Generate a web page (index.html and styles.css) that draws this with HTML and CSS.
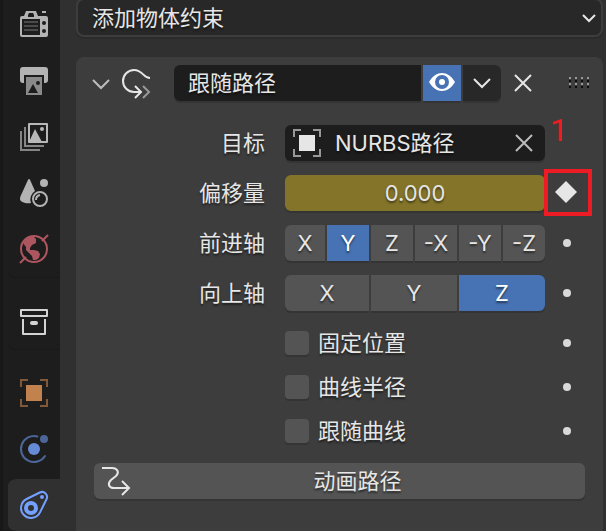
FILE: index.html
```html
<!DOCTYPE html>
<html lang="zh-CN">
<head>
<meta charset="utf-8">
<title>物体约束</title>
<link rel="stylesheet" href="styles.css">
</head>
<body>
<nav class="tabs" aria-label="属性">
  <div class="tab-group">
    <button class="tab" aria-label="渲染"><svg class="icon" viewBox="0 0 28 28"><path fill="#b3b3b3" fill-rule="evenodd" d="M2 5h2l2-5h10l2 5h8a2 2 0 0 1 2 2v17a2 2 0 0 1-2 2H2a2 2 0 0 1-2-2V7a2 2 0 0 1 2-2zM9 2L8 4v2h6V4l-1-2zM2 8v16h18V8z"/><path fill="#b3b3b3" d="M22 0h4v2h-4z"/><path stroke="#4a4a4a" stroke-width="2" d="M4 11h14M4 15h14M4 19h14"/><circle cx="24" cy="12" r="2" fill="#1d1d1d"/><circle cx="24" cy="20" r="2" fill="#1d1d1d"/></svg></button>
    <button class="tab" aria-label="输出"><svg class="icon" viewBox="0 0 28 28"><path fill="#b3b3b3" d="M3 0h22a3 3 0 0 1 3 3v10a3 3 0 0 1-3 3h-1V8H4v8H3a3 3 0 0 1-3-3V3a3 3 0 0 1 3-3z"/><path fill="#8a8a8a" d="M6 10h16v18H6z"/><path fill="#1d1d1d" d="M8 26l5-9 5 9z"/><circle cx="18" cy="16" r="2" fill="#1d1d1d"/></svg></button>
    <button class="tab" aria-label="视图层"><svg class="icon" viewBox="0 0 28 28"><path fill="none" stroke="#b8b8b8" stroke-width="2" stroke-linejoin="round" d="M9 1h18v18H9z"/><path fill="#b8b8b8" d="M9 19l6-13 7 13z"/><circle cx="22" cy="6" r="2" fill="#b8b8b8"/><path fill="none" stroke="#858585" stroke-width="2" d="M5 4v19h19M1 8v19h19"/></svg></button>
    <button class="tab" aria-label="场景"><svg class="icon" viewBox="0 0 28 28"><path fill="#b3b3b3" d="M9 0c1 0 1 1 2 3l4 9a10 10 0 0 0-4 12c-5 1-11-1-11-4 0-2 1-4 2-6L7 3c1-2 1-3 2-3z"/><circle cx="24" cy="4" r="4" fill="#b3b3b3"/><circle cx="20" cy="20" r="7" fill="none" stroke="#b3b3b3" stroke-width="2"/><path fill="none" stroke="#b3b3b3" stroke-width="2" d="M16 21q0-4 4-5"/></svg></button>
    <button class="tab" aria-label="世界环境"><svg class="icon" viewBox="0 0 28 28"><circle cx="14" cy="14" r="13" fill="none" stroke="#ae565f" stroke-width="2"/><path stroke="#ae565f" stroke-width="2" d="M28 0l-6 6M6 22l-6 6"/><path fill="#ae565f" d="M3 8l4-5 6-2 3 3v4l-4 2-2 3v2h4l4 1 2 3-1 4-3 2h-3l-1-4-3-3-3-3V12z"/></svg></button>
  </div>
  <div class="tab-group">
    <button class="tab" aria-label="集合"><svg class="icon" viewBox="0 0 28 28"><path fill="none" stroke="#d4d4d4" stroke-width="2" stroke-linejoin="round" d="M1 3h26v6H1zM3 12v15h22V12"/><rect x="10" y="14" width="8" height="4" rx="2" fill="#d4d4d4"/></svg></button>
  </div>
  <div class="tab-group">
    <button class="tab" aria-label="物体"><svg class="icon" viewBox="0 0 28 28"><path fill="none" stroke="#80593a" stroke-width="2" d="M1 8V1h7M20 1h7v7M27 20v7h-7M8 27H1v-7"/><path fill="#c1824e" d="M6 6h16v16H6z"/></svg></button>
    <button class="tab" aria-label="物理"><svg class="icon" viewBox="0 0 28 28"><path fill="none" stroke="#4d6699" stroke-width="2" stroke-linecap="round" d="M17.400 1.500A13 13 0 1 0 25 21"/><circle cx="14" cy="14" r="6" fill="#668bd6"/><circle cx="24" cy="4" r="4" fill="#4d6699"/></svg></button>
    <button class="tab active" aria-label="约束"><svg class="icon" viewBox="0 0 28 28"><path fill="none" stroke="#74a0ff" stroke-width="2" d="M6.600 8L19.800 1.500A5 5 0 0 1 26.500 8.200L20 21.400A10 10 0 1 1 6.600 8z"/><circle cx="11" cy="17" r="5" fill="none" stroke="#74a0ff" stroke-width="4"/><circle cx="22" cy="6" r="2" fill="#74a0ff"/></svg></button>
  </div>
</nav>
<main class="content">
  <div class="add-wrap">
    <select class="add" aria-label="添加物体约束"><option>添加物体约束</option></select>
    <svg class="add-arrow" viewBox="0 0 14 8"><path class="line" d="M1 1l6 6 6-6"/></svg>
  </div>
  <section class="panel">
    <header class="head">
      <button class="plain" aria-label="折叠"><svg class="chevron" viewBox="0 0 18 10"><path class="line dim" d="M1 2l8 8 8-8"/></svg></button>
      <svg class="follow" viewBox="0 0 28 30"><path class="line" d="M28 10C21 10 21 2 12 2a11 11 0 0 0 0 22h7M13 18l6 6-6 6"/><path class="line grey" d="M21 18l6 6-6 6"/></svg>
      <div class="name-group">
        <input class="name" aria-label="名称" value="跟随路径">
        <button class="eye" aria-label="显示"><svg class="eye-icon" viewBox="0 0 26 18"><path fill="#fff" fill-rule="evenodd" d="M0 8C7-4 19-4 26 8 19 20 7 20 0 8zM13 1a7 7 0 1 0 0 14 7 7 0 0 0 0-14z"/><circle cx="13" cy="8" r="3" fill="#fff"/></svg></button>
        <button class="more" aria-label="更多"><svg class="chevron" viewBox="0 0 18 10"><path class="line" d="M1 1l8 8 8-8"/></svg></button>
      </div>
      <button class="plain" aria-label="删除"><svg class="cross" viewBox="0 0 16 16"><path class="line" d="M0 0l16 16M16 0L0 16"/></svg></button>
      <svg class="grip" viewBox="0 0 20 11"><path stroke="#999" stroke-width="2" stroke-dasharray="2 4" d="M0 0h20M0 6h20"/><path stroke="#0c0c0c" stroke-width="2" stroke-dasharray="2 4" d="M0 3h20M0 9h20"/></svg>
    </header>
    <div class="rows">
      <div class="row">
        <label class="label" for="target">目标</label>
        <div class="target">
          <svg class="icon" viewBox="0 0 28 28"><path fill="none" stroke="#999" stroke-width="2" d="M1 8V1h7M20 1h7v7M27 20v7h-7M8 27H1v-7"/><path fill="#e6e6e6" d="M6 6h16v16H6z"/></svg>
          <input class="target-name" id="target" value="NURBS路径">
          <button class="plain" aria-label="清除"><svg class="cross" viewBox="0 0 16 16"><path class="line dim" d="M0 0l16 16M16 0L0 16"/></svg></button>
        </div>
      </div>
      <div class="row">
        <label class="label" for="offset">偏移量</label>
        <input class="offset" id="offset" value="0.000">
        <div class="key"><button class="plain" aria-label="关键帧"><svg class="diamond" viewBox="0 0 22 22"><path fill="#e6e6e6" d="M10-1l11 11-11 11L-1 10z"/></svg></button></div>
        <div class="callout"><span class="callout-number">1</span></div>
      </div>
      <div class="row">
        <span class="label" id="forward">前进轴</span>
        <div class="segments six" role="group" aria-labelledby="forward"><button>X</button><button class="on">Y</button><button>Z</button><button>-X</button><button>-Y</button><button>-Z</button></div>
        <div class="key"><button class="dot" aria-label="插入前进轴关键帧"></button></div>
      </div>
      <div class="row">
        <span class="label" id="up">向上轴</span>
        <div class="segments three" role="group" aria-labelledby="up"><button>X</button><button>Y</button><button class="on">Z</button></div>
        <div class="key"><button class="dot" aria-label="插入向上轴关键帧"></button></div>
      </div>
    </div>
    <div class="checks">
      <div class="row"><label class="check"><input type="checkbox">固定位置</label><div class="key"><button class="dot" aria-label="插入固定位置关键帧"></button></div></div>
      <div class="row"><label class="check"><input type="checkbox">曲线半径</label><div class="key"><button class="dot" aria-label="插入曲线半径关键帧"></button></div></div>
      <div class="row"><label class="check"><input type="checkbox">跟随曲线</label><div class="key"><button class="dot" aria-label="插入跟随曲线关键帧"></button></div></div>
    </div>
    <button class="animate"><svg class="icon" viewBox="0 0 28 28"><path class="line" d="M0 1h10C15 1 18 5 14 9L9 13C5 17 7 21 12 21h15M20 14l7 7-7 7"/></svg><span>动画路径</span></button>
  </section>
</main>
</body>
</html>
```
FILE: styles.css
```css
* { box-sizing: border-box; }

body {
  margin: 0;
  height: 100vh;
  display: flex;
  overflow: hidden;
  background: #303030;
  color: #e6e6e6;
  font: 22px/36px Inter, "Noto Sans CJK SC", sans-serif;
}

button, input, select {
  margin: 0;
  padding: 0;
  border: 0;
  border-radius: 0;
  background: none;
  color: inherit;
  font: inherit;
  text-shadow: inherit;
}

svg { display: block; flex: none; overflow: visible; }

.icon { width: 28px; height: 28px; }
.line { fill: none; stroke: #e6e6e6; stroke-width: 2; }
.dim { stroke: #bdbdbd; }
.grey { stroke: #999; }

.tabs {
  flex: none;
  width: 60px;
  border-left: 3px solid #181818;
  background: #1d1d1d;
  display: flex;
  flex-direction: column;
  gap: 16px;
}

.tab-group { margin-left: 5px; }
.tab-group:first-child { margin-top: -3px; }
.tab-group:not(:last-child) { border-bottom-left-radius: 8px; box-shadow: 0 1px 0 #191919; }

.tab {
  display: flex;
  align-items: center;
  width: 100%;
  height: 56px;
  padding-left: 12px;
}

.active {
  border-top: 2px solid #1d1d1d;
  border-bottom: 2px solid #1d1d1d;
  background: #303030;
  background-clip: padding-box;
  border-radius: 8px 0 0 8px;
}

.content {
  flex: 1;
  min-width: 0;
  padding: 0 3px 0 16px;
  display: flex;
  flex-direction: column;
  gap: 20px;
  text-shadow: 0 2px 2px rgba(0, 0, 0, 0.5);
}

.add-wrap {
  flex: none;
  margin-top: -2px;
  display: grid;
  align-items: center;
}

.add, .add-arrow { grid-area: 1 / 1; }

.add {
  appearance: none;
  width: 100%;
  height: 39px;
  padding-left: 14px;
  border: 2px solid #3d3d3d;
  border-radius: 8px;
  background: #282828;
  box-shadow: 0 2px 0 #2b2b2b;
}

.add-arrow { width: 14px; height: 8px; justify-self: end; margin-right: 7px; }

.panel {
  flex: 1;
  padding-top: 8px;
  border-radius: 8px 8px 0 0;
  background: #3d3d3d;
}

.head {
  display: flex;
  align-items: center;
  padding: 0 14px 0 16px;
}

.plain { flex: none; display: flex; align-items: center; }
.chevron { width: 18px; height: 10px; }
.cross { width: 16px; height: 16px; }
.follow { width: 28px; height: 30px; margin: 0 24px 0 12px; }
.grip { width: 20px; height: 11px; margin-left: 38px; }

.name-group {
  flex: 1;
  min-width: 0;
  margin-right: 14px;
  display: flex;
  gap: 2px;
}

.name {
  flex: 1;
  min-width: 0;
  height: 36px;
  padding-left: 14px;
  border-radius: 6px 0 0 6px;
  background: #1d1d1d;
}

.eye, .more {
  flex: none;
  width: 38px;
  height: 36px;
  display: flex;
  align-items: center;
  justify-content: center;
}

.eye { background: #4772b3; }
.eye-icon { width: 26px; height: 18px; }
.more { background: #282828; border-radius: 0 6px 6px 0; }

.name, .eye, .more, .target, .offset, .segments button, .animate, .check input {
  box-shadow: 0 2px 0 #343434;
}

.rows { padding: 24px 18px 0; display: grid; gap: 14px; }
.checks { padding: 20px 18px; display: grid; gap: 20px; }

.row {
  position: relative;
  display: grid;
  grid-template-columns: 171px 1fr 40px;
  align-items: center;
}

.label { text-align: right; }

.target, .offset, .segments { margin-left: 20px; height: 36px; min-width: 0; }

.target {
  display: flex;
  align-items: center;
  gap: 14px;
  padding: 0 13px 0 8px;
  border-radius: 6px;
  background: #1d1d1d;
}

.target-name { flex: 1; min-width: 0; }
.offset { border-radius: 6px; background: #83742a; text-align: center; }

.key { display: flex; justify-content: center; padding-left: 4px; }
.diamond { width: 22px; height: 22px; }
.dot { width: 8px; height: 8px; border-radius: 50%; background: #d9d9d9; }

.callout {
  position: absolute;
  right: -7px;
  top: -6px;
  width: 48px;
  height: 47px;
  border: 4px solid #ed1c24;
  pointer-events: none;
}

.callout-number {
  position: absolute;
  left: 2px;
  bottom: 64px;
  color: #ed1c24;
  font: 32px/36px Roboto, sans-serif;
  text-shadow: none;
}

.segments { display: grid; gap: 2px; }
.six { grid-template-columns: 40px repeat(5, 1fr); }
.three { grid-template-columns: 84px repeat(2, 1fr); }
.segments button { background: #545454; }
.segments button:first-child { border-radius: 6px 0 0 6px; }
.segments button:last-child { border-radius: 0 6px 6px 0; }
.segments .on { background: #4772b3; color: #fff; }

.check {
  grid-column: 2;
  margin-left: 20px;
  display: flex;
  align-items: center;
  gap: 9px;
  line-height: 24px;
}

.check input {
  appearance: none;
  width: 24px;
  height: 24px;
  border-radius: 4px;
  background: #545454;
}

.animate {
  display: flex;
  align-items: center;
  width: calc(100% - 36px);
  height: 36px;
  margin: 0 18px;
  padding-left: 8px;
  border-radius: 6px;
  background: #545454;
}

.animate span { flex: 1; }
```
